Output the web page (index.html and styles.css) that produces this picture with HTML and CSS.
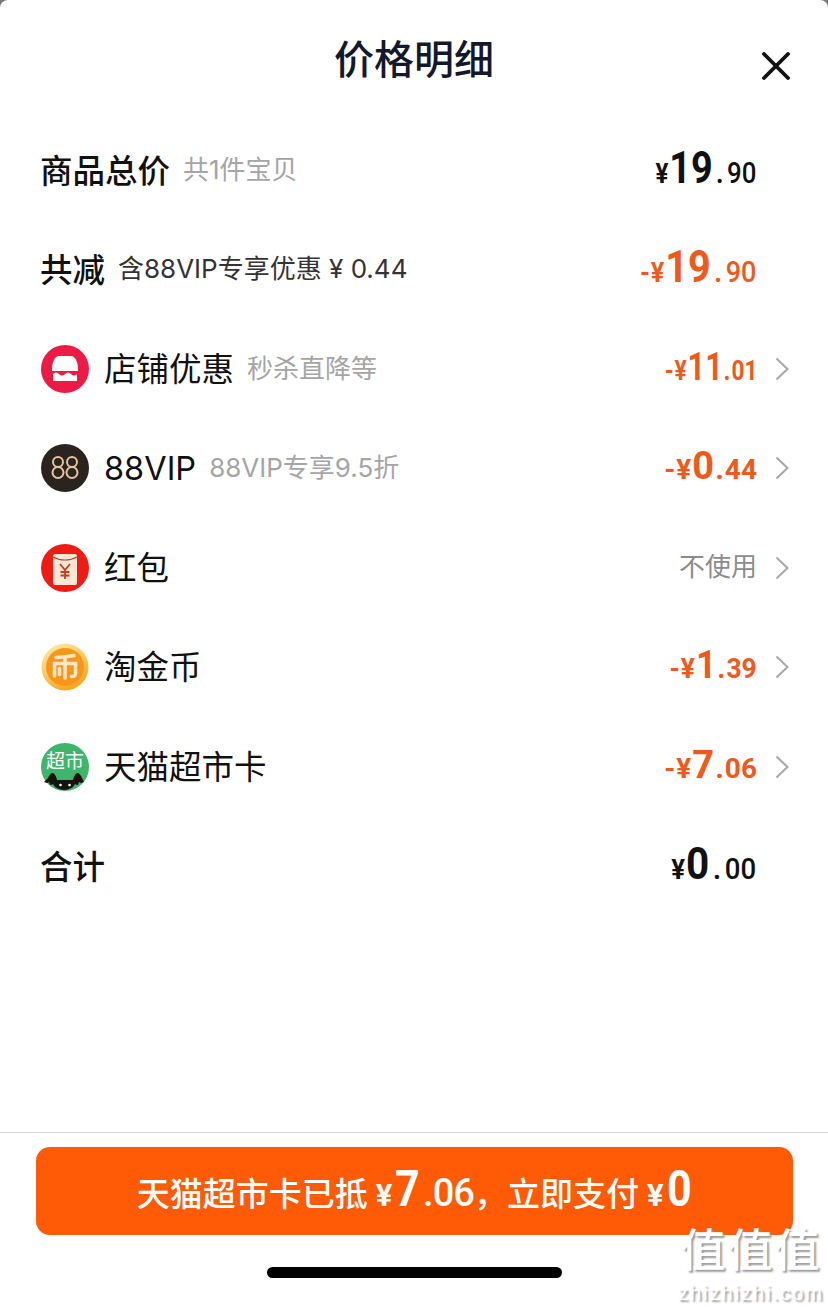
FILE: index.html
```html
<!DOCTYPE html>
<html lang="zh-CN">
<head>
  <meta charset="UTF-8">
  <title>价格明细</title>
  <link rel="stylesheet" href="styles.css">
</head>
<body>
  <div class="sheet">
    <header class="head">
      <h1>价格明细</h1>
      <svg class="close" viewBox="0 0 28 28" width="28" height="28"><path d="M2 2 L26 26 M26 2 L2 26" stroke="#111" stroke-width="3.8" stroke-linecap="round" fill="none"/></svg>
    </header>

    <div class="row">
      <div class="left"><span class="name">商品总价</span><span class="note">共1件宝贝</span></div>
      <div class="amount"><span class="cur">¥</span><span class="big">19</span><span class="dot">.</span><span class="dec">90</span></div>
    </div>

    <div class="row">
      <div class="left"><span class="name">共减</span><span class="note dark">含88VIP专享优惠 ¥ 0.44</span></div>
      <div class="amount red s90"><span class="cur">-¥</span><span class="big">19</span><span class="dot">.</span><span class="dec">90</span></div>
    </div>

    <div class="row">
      <div class="left">
        <svg class="ico" viewBox="0 0 48 48"><circle cx="24" cy="24" r="24" fill="#ec1a44"/><path d="M18 11h12c4 0 7 6 7 13v2H11v-2c0-7 3-13 7-13z" fill="#fff"/><path d="M12 29c2-2 4-2 6 0s4 2 6 0 4-2 6 0 4 2 6 0v7H12z" fill="#fff"/></svg>
        <span class="label">店铺优惠</span><span class="note">秒杀直降等</span>
      </div>
      <div class="right">
        <div class="amount red small s81"><span class="cur">-¥</span><span class="big">11</span><span class="dot">.</span><span class="dec">01</span></div>
        <svg class="arrow" viewBox="0 0 14 24" width="14" height="24"><path d="M1.5 1.5 L12.5 12 L1.5 22.5" stroke="#aaa" stroke-width="2.2" fill="none"/></svg>
      </div>
    </div>

    <div class="row">
      <div class="left">
        <svg class="ico" viewBox="0 0 48 48"><circle cx="24" cy="24" r="24" fill="#2b2320"/><g fill="none" stroke="#e6c39c" stroke-width="2"><circle cx="17" cy="18" r="5"/><circle cx="17" cy="28.5" r="5.5"/><circle cx="31" cy="18" r="5"/><circle cx="31" cy="28.5" r="5.5"/></g></svg>
        <span class="label">88VIP</span><span class="note">88VIP专享9.5折</span>
      </div>
      <div class="right">
        <div class="amount red small s100"><span class="cur">-¥</span><span class="big">0</span><span class="dot">.</span><span class="dec">44</span></div>
        <svg class="arrow" viewBox="0 0 14 24" width="14" height="24"><path d="M1.5 1.5 L12.5 12 L1.5 22.5" stroke="#aaa" stroke-width="2.2" fill="none"/></svg>
      </div>
    </div>

    <div class="row">
      <div class="left">
        <svg class="ico" viewBox="0 0 48 48"><circle cx="24" cy="24" r="24" fill="#ee1c14"/><rect x="12" y="10" width="24" height="31" rx="2" fill="#fde6d4"/><path d="M12 13c7 4 17 4 24 0" stroke="#a8412e" stroke-width="1.2" fill="none"/><path d="M19 20l5 6 5-6M24 26v9M19.5 28h9M19.5 31.5h9" stroke="#c43c24" stroke-width="1.8" fill="none"/></svg>
        <span class="label">红包</span>
      </div>
      <div class="right">
        <span class="unused">不使用</span>
        <svg class="arrow" viewBox="0 0 14 24" width="14" height="24"><path d="M1.5 1.5 L12.5 12 L1.5 22.5" stroke="#aaa" stroke-width="2.2" fill="none"/></svg>
      </div>
    </div>

    <div class="row">
      <div class="left">
        <svg class="ico" viewBox="0 0 48 48">
          <defs><linearGradient id="coinRim" x1="0.2" y1="0" x2="0.7" y2="1"><stop offset="0" stop-color="#fdeaa0"/><stop offset="1" stop-color="#f9a21c"/></linearGradient></defs>
          <circle cx="24" cy="24" r="23.5" fill="url(#coinRim)"/><circle cx="24" cy="24" r="19" fill="#f8961a"/>
          <path d="M15 14.5 Q25 14 33 12.5M24 14.5V35M13.5 33V20.5h21V30c0 3-1 3.5-4 3.5M18.5 25.5v6" stroke="#fde7c8" stroke-width="3.6" fill="none" stroke-linecap="round"/>
        </svg>
        <span class="label">淘金币</span>
      </div>
      <div class="right">
        <div class="amount red small s94"><span class="cur">-¥</span><span class="big">1</span><span class="dot">.</span><span class="dec">39</span></div>
        <svg class="arrow" viewBox="0 0 14 24" width="14" height="24"><path d="M1.5 1.5 L12.5 12 L1.5 22.5" stroke="#aaa" stroke-width="2.2" fill="none"/></svg>
      </div>
    </div>

    <div class="row">
      <div class="left">
        <svg class="ico" viewBox="0 0 48 48"><circle cx="24" cy="24" r="24" fill="#3fb56b"/><text x="24" y="25" class="ico-text">超市</text><path d="M7 35c1-3 3-5 5-5 2 1 3 3 4 7h16c1-4 2-6 4-7 2 0 4 2 5 5l2 4-3 1-2-1-1 3c-2 0-3-1-3-1l-2 3c-3 2-6 3-9 3s-6-1-9-3l-2-3s-1 1-3 1l-1-3-2 1-3-1z" fill="#17120f"/><circle cx="19.5" cy="42" r="1.3" fill="#fff"/><circle cx="28.5" cy="42" r="1.3" fill="#fff"/></svg>
        <span class="label">天猫超市卡</span>
      </div>
      <div class="right">
        <div class="amount red small s100"><span class="cur">-¥</span><span class="big">7</span><span class="dot">.</span><span class="dec">06</span></div>
        <svg class="arrow" viewBox="0 0 14 24" width="14" height="24"><path d="M1.5 1.5 L12.5 12 L1.5 22.5" stroke="#aaa" stroke-width="2.2" fill="none"/></svg>
      </div>
    </div>

    <div class="row">
      <div class="left"><span class="name">合计</span></div>
      <div class="amount s92"><span class="cur">¥</span><span class="big">0</span><span class="dot">.</span><span class="dec">00</span></div>
    </div>

    <footer class="foot">
      <div class="pay">
        <span class="pay-text">天猫超市卡已抵</span><span class="pay-cur">¥</span><span class="pay-big">7</span><span class="pay-dec">.06</span><span class="pay-text">，立即支付</span><span class="pay-cur">¥</span><span class="pay-big">0</span>
      </div>
      <div class="home-bar"></div>
    </footer>

    <div class="mark">
      <div class="mark-big">值值值</div>
      <div class="mark-url">zhizhizhi.com</div>
    </div>
  </div>
</body>
</html>
```

FILE: styles.css
```css
* {
  box-sizing: border-box;
}

html, body {
  margin: 0;
  padding: 0;
  background: #777;
}

.sheet {
  position: relative;
  width: 828px;
  height: 1307px;
  display: flex;
  flex-direction: column;
  overflow: hidden;
  background: #fff;
  border-radius: 8px 8px 0 0;
  font-family: Inter, "Noto Sans CJK SC", sans-serif;
  color: #111;
}

.head {
  height: 120px;
  flex: none;
  position: relative;
  padding-top: 36px;
}

.head h1 {
  margin: 0;
  text-align: center;
  font-size: 40px;
  line-height: 48px;
  font-weight: 500;
  color: #14182b;
}

.close {
  position: absolute;
  left: 762px;
  top: 52px;
}

.row {
  height: 99.5px;
  flex: none;
  display: flex;
  align-items: center;
  justify-content: space-between;
  padding: 0 37px 0 41px;
}

.left {
  display: flex;
  align-items: center;
}

.right {
  display: flex;
  align-items: center;
  margin-right: 2px;
}

.name {
  font-size: 32.5px;
  line-height: 44px;
  font-weight: 500;
  color: #111;
  margin-left: -1px;
  margin-top: 4px;
}

.note {
  margin-left: 13px;
  font-size: 26px;
  line-height: 36px;
  color: #a5a5a5;
  font-weight: 400;
}

.note.dark {
  font-size: 26px;
  color: #333;
}

.ico {
  width: 48px;
  height: 48px;
  flex: none;
  margin-right: 15px;
}

.ico-text {
  font-family: "Noto Sans CJK SC", sans-serif;
  font-size: 19px;
  font-weight: 400;
  fill: #fff;
  text-anchor: middle;
}

.label {
  font-size: 32.5px;
  line-height: 44px;
  font-weight: 400;
  color: #111;
  margin-top: 2px;
}

.amount {
  display: flex;
  align-items: baseline;
  margin-right: 35px;
  font-family: Roboto, sans-serif;
  font-weight: 700;
  color: #111;
  transform: scaleX(0.86);
  transform-origin: right center;
  margin-bottom: 4px;
}

.amount.s81 {
  transform: scaleX(0.81);
}

.amount.s90 {
  transform: scaleX(0.9);
}

.amount.s92 {
  transform: scaleX(0.92);
}

.amount.s94 {
  transform: scaleX(0.94);
}

.amount.s100 {
  transform: none;
}

.right .amount {
  margin-right: 18px;
}

.amount.red {
  color: #f0591c;
}

.cur {
  font-size: 28px;
  letter-spacing: 1px;
}

.big {
  font-size: 44px;
}

.dot {
  font-size: 30px;
  margin: 0 4px;
}

.dec {
  font-size: 30px;
  font-weight: 500;
}

.small .big {
  font-size: 38px;
}

.small .dot {
  margin: 0 1px;
}

.small .dec {
  font-size: 28px;
  font-weight: 700;
}

.unused {
  margin-right: 18px;
  margin-bottom: 1px;
  font-size: 26px;
  line-height: 36px;
  font-weight: 400;
  color: #8c8c8c;
}

.arrow {
  flex: none;
}

.foot {
  margin-top: auto;
  height: 175px;
  flex: none;
  border-top: 1px solid #d4d4d4;
  padding: 14px 35px 0 36px;
}

.pay {
  height: 88px;
  border-radius: 14px;
  background: #ff5a06;
  color: #fff;
  display: flex;
  align-items: baseline;
  justify-content: center;
  line-height: 84px;
  font-size: 33px;
  font-weight: 500;
}

.pay-cur {
  margin-left: 8px;
  font-family: Roboto, sans-serif;
  font-size: 31px;
  font-weight: 700;
}

.pay-big {
  margin: 0 -1px 0 1px;
  font-family: Roboto, sans-serif;
  font-size: 50px;
  font-weight: 700;
  transform: scaleX(0.86);
}

.pay-dec {
  margin-left: 2px;
  font-family: Roboto, sans-serif;
  font-size: 38px;
  font-weight: 500;
  letter-spacing: -1px;
}

.home-bar {
  width: 295px;
  height: 11px;
  margin: 32px auto 0 231px;
  border-radius: 6px;
  background: #000;
}

.mark {
  position: absolute;
  left: 676px;
  top: 1219px;
  width: 150px;
  text-align: center;
  color: #fff;
  text-shadow: 2px 2px 2px #9a9a9a;
  pointer-events: none;
}

.mark-big {
  font-family: "Noto Sans CJK SC", sans-serif;
  font-size: 45px;
  line-height: 58px;
  letter-spacing: 2px;
  font-weight: 500;
  white-space: nowrap;
}

.mark-url {
  margin-top: 5px;
  font-family: "Liberation Sans", sans-serif;
  font-size: 20px;
  line-height: 22px;
  letter-spacing: 2px;
  white-space: nowrap;
}
```
